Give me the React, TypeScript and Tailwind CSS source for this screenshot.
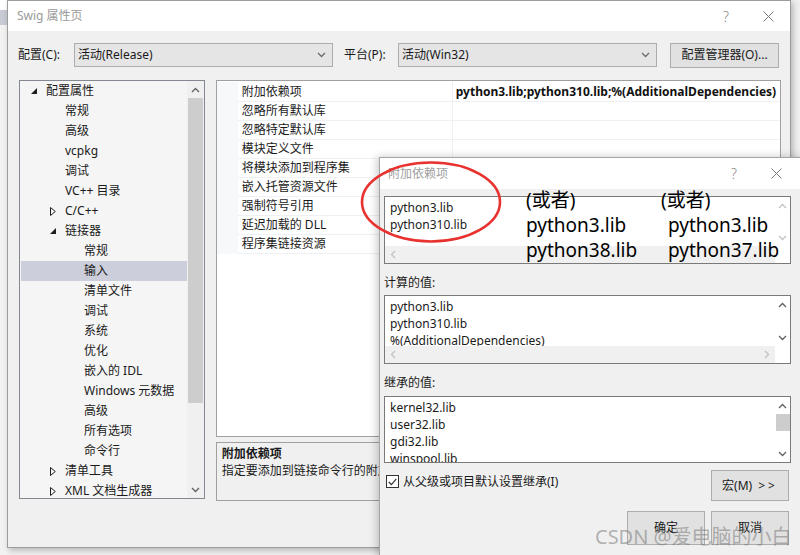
import React from "react";

type Dir = "up" | "down" | "left" | "right";

// small scrollbar / combo chevrons
const Chevron = ({ dir, className = "" }: { dir: Dir; className?: string }) => {
  const vertical = dir === "up" || dir === "down";
  const paths: Record<Dir, string> = {
    up: "M1 5 L4.5 1.5 L8 5",
    down: "M1 1 L4.5 4.5 L8 1",
    left: "M5 1 L1.5 4.5 L5 8",
    right: "M1 1 L4.5 4.5 L1 8",
  };
  return (
    <svg
      width={vertical ? 9 : 6}
      height={vertical ? 6 : 9}
      viewBox={vertical ? "0 0 9 6" : "0 0 6 9"}
      className={className}
    >
      <path d={paths[dir]} fill="none" stroke="currentColor" strokeWidth="1.3" />
    </svg>
  );
};

const CloseX = () => (
  <svg width="11" height="11" viewBox="0 0 11 11" className="text-[#7a7a7a]">
    <path d="M0.5 0.5 L10.5 10.5 M10.5 0.5 L0.5 10.5" stroke="currentColor" strokeWidth="1" />
  </svg>
);

const treeItems = [
  { label: "配置属性", level: 0, toggle: "open" },
  { label: "常规", level: 1 },
  { label: "高级", level: 1 },
  { label: "vcpkg", level: 1 },
  { label: "调试", level: 1 },
  { label: "VC++ 目录", level: 1 },
  { label: "C/C++", level: 1, toggle: "closed" },
  { label: "链接器", level: 1, toggle: "open" },
  { label: "常规", level: 2 },
  { label: "输入", level: 2, selected: true },
  { label: "清单文件", level: 2 },
  { label: "调试", level: 2 },
  { label: "系统", level: 2 },
  { label: "优化", level: 2 },
  { label: "嵌入的 IDL", level: 2 },
  { label: "Windows 元数据", level: 2 },
  { label: "高级", level: 2 },
  { label: "所有选项", level: 2 },
  { label: "命令行", level: 2 },
  { label: "清单工具", level: 1, toggle: "closed" },
  { label: "XML 文档生成器", level: 1, toggle: "closed" },
];

const indent = ["pl-[10px]", "pl-[29px]", "pl-[48px]"];

const properties = [
  "附加依赖项",
  "忽略所有默认库",
  "忽略特定默认库",
  "模块定义文件",
  "将模块添加到程序集",
  "嵌入托管资源文件",
  "强制符号引用",
  "延迟加载的 DLL",
  "程序集链接资源",
];

const Toggle = ({ kind }: { kind?: string }) => (
  <span className="w-[15px] h-[20px] flex items-center">
    {kind === "open" && (
      <svg width="6" height="6" viewBox="0 0 6 6">
        <polygon points="6,0 6,6 0,6" fill="#1e1e1e" />
      </svg>
    )}
    {kind === "closed" && (
      <svg width="6" height="9" viewBox="0 0 6 9">
        <polygon points="0.5,0.5 5.3,4.5 0.5,8.5" fill="none" stroke="#1e1e1e" strokeWidth="1" />
      </svg>
    )}
  </span>
);

const Combo = ({ text }: { text: string }) => (
  <div className="w-[259px] h-[24px] bg-[#e5e5e5] border border-[#adadad] flex items-center pl-[3px] pr-[6px]">
    <span className="flex-1">{text}</span>
    <Chevron dir="down" className="text-[#6a6a6a]" />
  </div>
);

const Button = ({ children, className = "" }: { children: React.ReactNode; className?: string }) => (
  <div className={`bg-[#e1e1e1] border border-[#adadad] flex items-center justify-center ${className}`}>
    {children}
  </div>
);

const VScroll = ({ active, thumb }: { active: boolean; thumb?: boolean }) => (
  <div className="w-[15px] bg-white flex flex-col items-center">
    <div className={`h-[17px] flex items-center ${active ? "text-[#606060]" : "text-[#c2c2c2]"}`}>
      <Chevron dir="up" />
    </div>
    {thumb && <div className="w-[14px] h-[17px] bg-[#cdcdcd]" />}
    <div className="flex-1" />
    <div className={`h-[17px] flex items-center ${active ? "text-[#606060]" : "text-[#c2c2c2]"}`}>
      <Chevron dir="down" />
    </div>
  </div>
);

const HScroll = () => (
  <div className="h-[17px] flex">
    <div className="flex-1 bg-[#f0f0f0] flex items-center justify-between px-[5px] text-[#c2c2c2]">
      <Chevron dir="left" />
      <Chevron dir="right" />
    </div>
    <div className="w-[15px] bg-white" />
  </div>
);

const TextList = ({ lines, className = "" }: { lines: string[]; className?: string }) => (
  <div className={`flex-1 pt-[2px] pl-[5px] overflow-hidden leading-[17px] ${className}`}>
    {lines.map((l, i) => (
      <div key={i} className="whitespace-nowrap">
        {l}
      </div>
    ))}
  </div>
);

export default function App() {
  return (
    <div className="relative w-[800px] h-[555px] overflow-hidden bg-[#efefef] flex font-['Noto_Sans','Noto_Sans_CJK_SC',sans-serif] text-[12px] text-[#1a1a1a]">
      {/* desktop strip on the left */}
      <div className="w-[7px] flex flex-col">
        <div className="h-[10px] bg-white" />
        <div className="h-[15px] bg-[#c9cbd4]" />
        <div className="flex-1 bg-[#f2f2f2]" />
      </div>

      {/* main property pages window */}
      <div className="w-[784px] h-[548px] border border-[#9c9c9c] bg-[#f0f0f0] flex flex-col shadow-[2px_2px_6px_rgba(0,0,0,0.25)] shrink-0">
        <div className="h-[30px] bg-white flex items-center pl-[9px] text-[#9a9a9a]">
          <span>Swig 属性页</span>
          <span className="ml-auto text-[14px] font-light text-[#8a8a8a]">?</span>
          <span className="ml-[34px] mr-[16px] flex items-center">
            <CloseX />
          </span>
        </div>

        <div className="flex-1 pl-[10px] pr-[9px]">
          {/* configuration row */}
          <div className="mt-[12px] flex items-center h-[24px]">
            <span className="w-[56px]">配置(C):</span>
            <Combo text="活动(Release)" />
            <span className="ml-[11px] w-[54px]">平台(P):</span>
            <Combo text="活动(Win32)" />
            <Button className="ml-[13px] w-[109px] h-[25px]">配置管理器(O)...</Button>
          </div>

          <div className="mt-[13px] flex">
            {/* tree */}
            <div className="ml-[1px] w-[186px] h-[419px] border border-[#828790] bg-[#f5f5f5] flex overflow-hidden">
              <div className="flex-1 pl-[1px] overflow-hidden">
                {treeItems.map((t, i) => (
                  <div
                    key={i}
                    className={`h-[20px] flex items-center whitespace-nowrap ${indent[t.level]} ${
                      t.selected ? "bg-[#cccedb]" : ""
                    }`}
                  >
                    <Toggle kind={t.toggle} />
                    <span>{t.label}</span>
                  </div>
                ))}
              </div>
              <div className="w-[17px] bg-[#f0f0f0] flex flex-col items-center">
                <div className="h-[17px] flex items-center text-[#606060]">
                  <Chevron dir="up" />
                </div>
                <div className="w-[15px] h-[305px] bg-[#cdcdcd]" />
                <div className="flex-1" />
                <div className="h-[17px] flex items-center text-[#606060]">
                  <Chevron dir="down" />
                </div>
              </div>
            </div>

            {/* property grid + description */}
            <div className="ml-[11px] w-[566px] flex flex-col">
              <div className="h-[357px] border border-[#a0a0a0] bg-white pt-[1px] overflow-hidden">
                {properties.map((p, i) => (
                  <div key={i} className={`flex ${i === 0 ? "h-[20px]" : "h-[19px]"}`}>
                    <div className="w-[21px] bg-[#f7f8fa]" />
                    <div className="w-[215px] pl-[4px] border-b border-r border-[#eef0f3] flex items-center">
                      {p}
                    </div>
                    <div className="flex-1 pl-[3px] border-b border-[#eef0f3] flex items-center whitespace-nowrap overflow-hidden">
                      {i === 0 && (
                        <span className="font-bold text-[#111]">
                          python3.lib;python310.lib;%(AdditionalDependencies)
                        </span>
                      )}
                    </div>
                  </div>
                ))}
              </div>
              <div className="mt-[5px] h-[59px] border border-[#a0a0a0] pl-[5px] pt-[2px] leading-[17px]">
                <div className="font-bold">附加依赖项</div>
                <div className="whitespace-nowrap">指定要添加到链接命令行的附加项</div>
              </div>
            </div>
          </div>
        </div>
      </div>

      {/* additional dependencies dialog */}
      <div className="absolute left-[379px] top-[157px] w-[425px] h-[402px] border border-[#a5a5a5] bg-[#f0f0f0] shadow-[-2px_0_8px_rgba(0,0,0,0.22)]">
        <div className="h-[31px] bg-white flex items-center pl-[8px] text-[#a0a0a0]">
          <span>附加依赖项</span>
          <span className="ml-auto text-[14px] font-light text-[#8a8a8a]">?</span>
          <span className="ml-[34px] mr-[21px] flex items-center">
            <CloseX />
          </span>
        </div>

        <div className="ml-[4px] w-[407px] pt-[7px]">
          <div className="h-[68px] border border-[#7a7a7a] bg-white flex flex-col">
            <div className="flex-1 flex">
              <TextList lines={["python3.lib", "python310.lib"]} />
              <VScroll active={false} />
            </div>
            <div className="h-[17px] flex">
              <div className="flex-1 bg-[#f0f0f0] flex items-center px-[5px] text-[#c2c2c2]">
                <Chevron dir="left" />
              </div>
              <div className="w-[15px] bg-white" />
            </div>
          </div>

          <div className="mt-[10px] h-[18px] leading-[18px]">计算的值:</div>
          <div className="mt-[3px] h-[69px] border border-[#7a7a7a] bg-white flex flex-col">
            <div className="flex-1 flex overflow-hidden">
              <TextList lines={["python3.lib", "python310.lib", "%(AdditionalDependencies)"]} />
              <VScroll active={true} />
            </div>
            <HScroll />
          </div>

          <div className="mt-[10px] h-[18px] leading-[18px]">继承的值:</div>
          <div className="mt-[4px] h-[67px] border border-[#7a7a7a] bg-white flex overflow-hidden">
            <TextList lines={["kernel32.lib", "user32.lib", "gdi32.lib", "winspool.lib"]} />
            <VScroll active={true} thumb />
          </div>

          <div className="mt-[7px] flex items-start pr-[2px]">
            <div className="mt-[5px] ml-[2px] flex items-center gap-[4px]">
              <span className="w-[13px] h-[13px] border border-[#333] bg-white flex items-center justify-center">
                <svg width="9" height="8" viewBox="0 0 9 8">
                  <path d="M0.8 4 L3.4 6.6 L8.3 0.9" fill="none" stroke="#333" strokeWidth="1.2" />
                </svg>
              </span>
              <span className="leading-[13px]">从父级或项目默认设置继承(I)</span>
            </div>
            <Button className="ml-auto w-[78px] h-[31px]">
              宏(M)<span className="ml-[6px] tracking-[3px]">&gt;&gt;</span>
            </Button>
          </div>

          <div className="mt-[10px] flex justify-end gap-[6px] pr-[2px]">
            <Button className="w-[78px] h-[34px]">确定</Button>
            <Button className="w-[78px] h-[34px]">取消</Button>
          </div>
        </div>
      </div>

      {/* annotation text typed over the first box */}
      <div className="absolute left-[526px] top-[188px] text-[19px] leading-[25px] text-black whitespace-nowrap">
        <div>(或者)</div>
        <div>python3.lib</div>
        <div>python38.lib</div>
      </div>
      <div className="absolute left-[661px] top-[188px] text-[19px] leading-[25px] text-black whitespace-nowrap">
        <div>(或者)</div>
        <div className="pl-[7px]">python3.lib</div>
        <div className="pl-[7px]">python37.lib</div>
      </div>

      {/* red marker ellipse */}
      <svg className="absolute left-[355px] top-[155px] pointer-events-none" width="160" height="95" viewBox="0 0 160 95">
        <ellipse cx="76" cy="47" rx="69" ry="39.5" fill="none" stroke="#e8322f" strokeWidth="2.6" />
      </svg>

      {/* watermark */}
      <div className="absolute left-[595px] top-[525px] text-[20px] leading-[24px] text-[rgba(120,120,120,0.55)] whitespace-nowrap">
        CSDN @爱电脑的小白
      </div>
    </div>
  );
}
